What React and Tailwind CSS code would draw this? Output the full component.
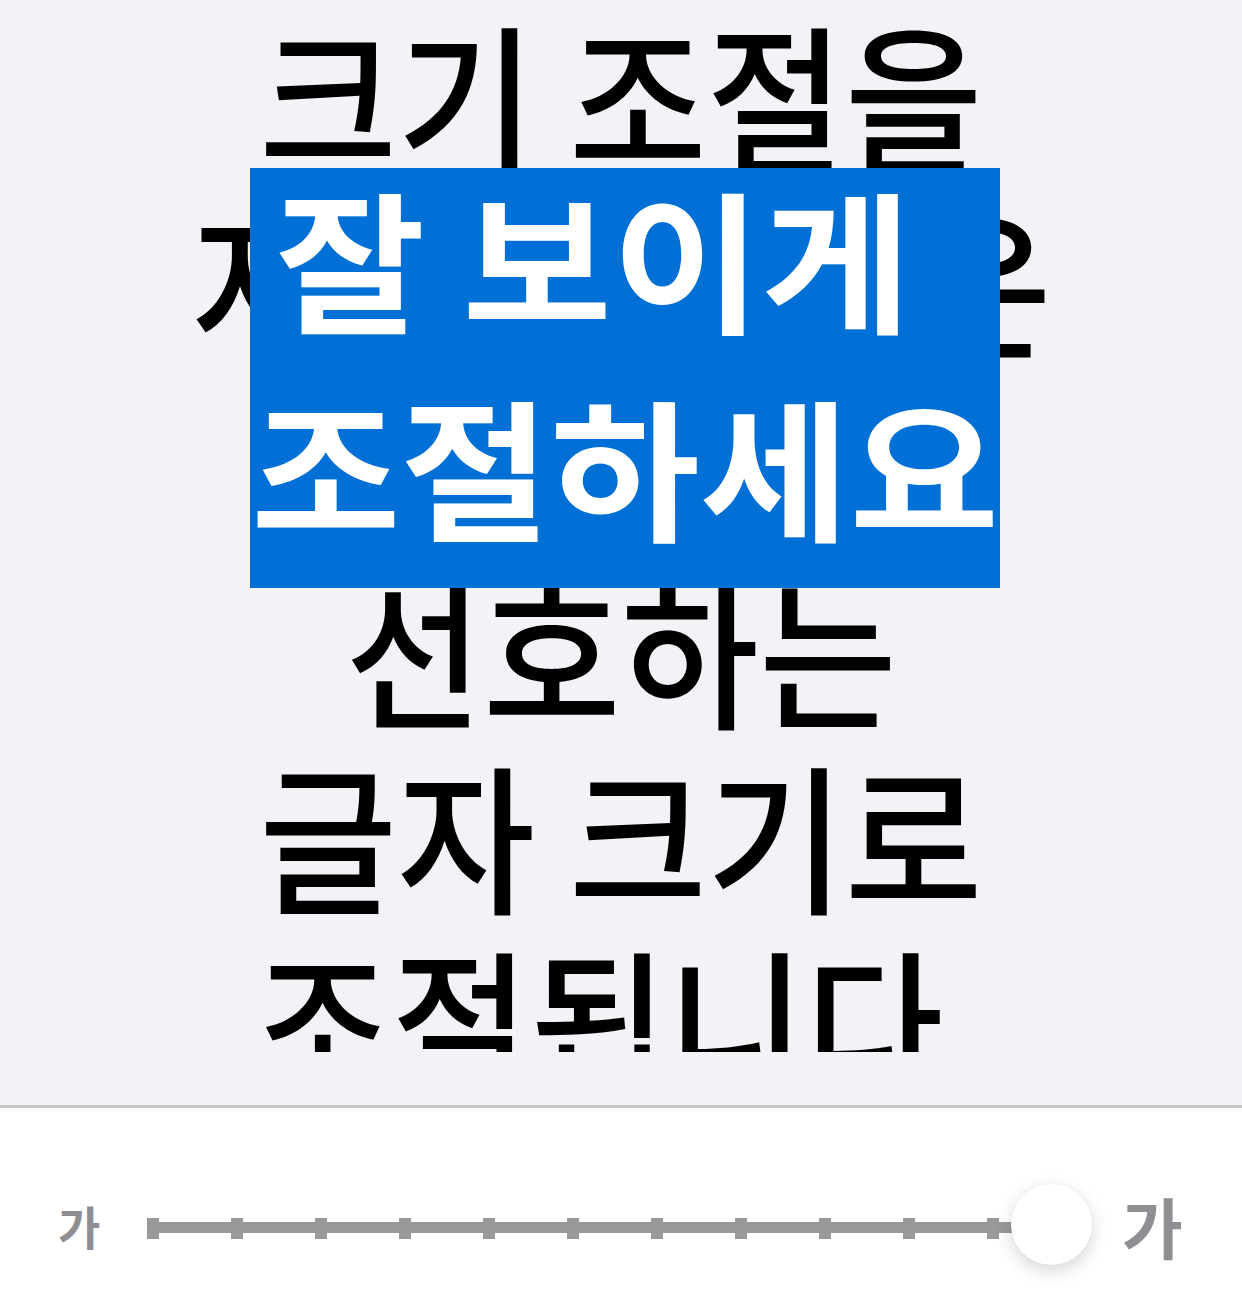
export default function App() {
  const ticks = Array.from({ length: 11 });
  return (
    <div className="w-[1242px] h-[1314px] bg-[#f2f2f7] flex flex-col overflow-hidden font-['Noto_Sans_CJK_KR',sans-serif]">
      <div className="relative h-[1105px] shrink-0">
        <div className="h-[1052px] overflow-hidden">
          <div className="text-center text-black text-[160px] leading-[185px] font-medium whitespace-nowrap scale-x-[0.937]">
            <p>크기 조절을</p>
            <p>지원하는 앱은</p>
            <p>아래에서</p>
            <p>선호하는</p>
            <p>글자 크기로</p>
            <p>조절됩니다.</p>
          </div>
        </div>
        <div className="absolute left-[250px] top-[168px] w-[750px] h-[420px] overflow-hidden bg-[#006fd6] text-white text-center text-[152px] leading-[208px] font-bold whitespace-nowrap">
          <div className="-mt-[16px] scale-x-[1.07]">
            <p className="pr-[59px]">잘 보이게</p>
            <p>조절하세요</p>
          </div>
        </div>
      </div>
      <div className="h-[3px] shrink-0 bg-[#c6c6c8]" />
      <div className="flex-1 bg-white pt-[76px]">
        <div className="flex items-center h-[81px]">
          <div className="w-[147px] pl-[58px] text-[46px] leading-none font-bold text-[#8e8e93]">가</div>
          <div className="relative w-[945px] h-[81px] flex items-center">
            <div className="absolute left-0 right-[41px] top-[38px] h-[11px] bg-[#999999]" />
            <div className="relative w-[852px] flex justify-between items-center mt-[8px]">
              {ticks.map((_, i) => (
                <div key={i} className="w-[12px] h-[21px] bg-[#999999]" />
              ))}
            </div>
            <div className="absolute right-0 top-0 w-[81px] h-[81px] rounded-full bg-white shadow-[0_6px_18px_rgba(0,0,0,0.16),0_0_2px_rgba(0,0,0,0.06)]" />
          </div>
          <div className="pl-[30px] text-[66px] leading-none font-bold text-[#8e8e93]">가</div>
        </div>
      </div>
    </div>
  );
}
